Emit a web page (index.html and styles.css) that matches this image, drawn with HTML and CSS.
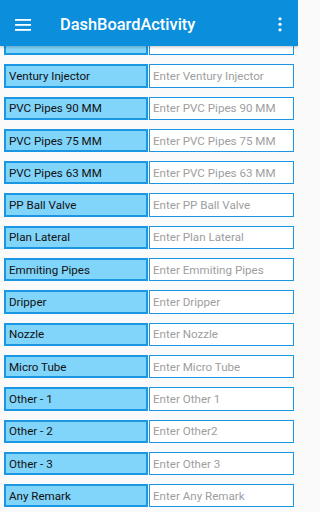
FILE: index.html
```html
<!DOCTYPE html>
<html>
<head>
<meta charset="utf-8">
<link rel="stylesheet" href="styles.css">
</head>
<body>
<div class="app">
  <header class="toolbar">
    <svg class="menu" width="16" height="12" viewBox="0 0 16 12"><rect x="0" y="0" width="16" height="1.8" fill="#fff"/><rect x="0" y="5" width="16" height="1.8" fill="#fff"/><rect x="0" y="10" width="16" height="1.8" fill="#fff"/></svg>
    <span class="title">DashBoardActivity</span>
    <svg class="more" width="4" height="15" viewBox="0 0 4 15"><circle cx="2" cy="1.8" r="1.6" fill="#fff"/><circle cx="2" cy="7.3" r="1.6" fill="#fff"/><circle cx="2" cy="12.8" r="1.6" fill="#fff"/></svg>
  </header>
  <main class="viewport">
    <div class="list">
      <div class="row"><div class="label"></div><div class="field"></div></div>
      <div class="row"><div class="label">Ventury Injector</div><div class="field">Enter Ventury Injector</div></div>
      <div class="row"><div class="label">PVC Pipes 90 MM</div><div class="field">Enter PVC Pipes 90 MM</div></div>
      <div class="row"><div class="label">PVC Pipes 75 MM</div><div class="field">Enter PVC Pipes 75 MM</div></div>
      <div class="row"><div class="label">PVC Pipes 63 MM</div><div class="field">Enter PVC Pipes 63 MM</div></div>
      <div class="row"><div class="label">PP Ball Valve</div><div class="field">Enter PP Ball Valve</div></div>
      <div class="row"><div class="label">Plan Lateral</div><div class="field">Enter Plan Lateral</div></div>
      <div class="row"><div class="label">Emmiting Pipes</div><div class="field">Enter Emmiting Pipes</div></div>
      <div class="row"><div class="label">Dripper</div><div class="field">Enter Dripper</div></div>
      <div class="row"><div class="label">Nozzle</div><div class="field">Enter Nozzle</div></div>
      <div class="row"><div class="label">Micro Tube</div><div class="field">Enter Micro Tube</div></div>
      <div class="row"><div class="label">Other - 1</div><div class="field">Enter Other 1</div></div>
      <div class="row"><div class="label">Other - 2</div><div class="field">Enter Other2</div></div>
      <div class="row"><div class="label">Other - 3</div><div class="field">Enter Other 3</div></div>
      <div class="row"><div class="label">Any Remark</div><div class="field">Enter Any Remark</div></div>
    </div>
  </main>
</div>
</body>
</html>
```
FILE: styles.css
```css
* { box-sizing: border-box; }
html, body { margin: 0; padding: 0; }
body {
  background: #fafafa;
  font-family: Roboto, "Liberation Sans", sans-serif;
}
.app {
  width: 298px;
  height: 512px;
  overflow: hidden;
  display: flex;
  flex-direction: column;
}
.toolbar {
  height: 46px;
  flex: none;
  background: #0b8fdc;
  display: flex;
  align-items: center;
  padding: 3px 0 0 15px;
  position: relative;
  z-index: 2;
  box-shadow: 0 1px 3px rgba(0,0,0,0.25);
}
.menu { flex: none; }
.title {
  color: #fff;
  font-size: 16.4px;
  font-weight: 500;
  margin-left: 29px;
  flex: 1;
}
.more { flex: none; margin-right: 16px; }
.viewport {
  flex: 1;
  overflow: hidden;
}
.list {
  margin-top: -14px;
  display: flex;
  flex-direction: column;
  gap: 9px;
  padding: 0 4px;
}
.row {
  height: 23.3px;
  display: flex;
}
.label {
  width: 144px;
  flex: none;
  background: #81d4fa;
  border: 2px solid #1a96e2;
  font-size: 11.6px;
  color: #111;
  display: flex;
  align-items: center;
  padding-left: 3px;
}
.field {
  width: 145px;
  margin-left: 1px;
  flex: none;
  background: #fff;
  border: 1.5px solid #1a96e2;
  font-size: 11.6px;
  color: #9e9e9e;
  display: flex;
  align-items: center;
  padding-left: 3px;
}
```
